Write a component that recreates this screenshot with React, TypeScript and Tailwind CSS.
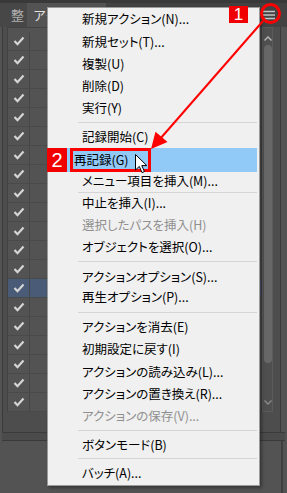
import React from 'react';

type Entry =
  | { kind: 'item'; label: string; h: string; disabled?: boolean; active?: boolean }
  | { kind: 'sep'; m: string };

const menu: Entry[] = [
  { kind: 'item', label: '新規アクション(N)...', h: 'h-[23px]' },
  { kind: 'item', label: '新規セット(T)...', h: 'h-[22px]' },
  { kind: 'item', label: '複製(U)', h: 'h-[22px]' },
  { kind: 'item', label: '削除(D)', h: 'h-[22px]' },
  { kind: 'item', label: '実行(Y)', h: 'h-[22px]' },
  { kind: 'sep', m: 'mt-[3px] mb-[4px]' },
  { kind: 'item', label: '記録開始(C)', h: 'h-[21px]' },
  { kind: 'item', label: '再記録(G)', h: 'h-[24px]', active: true },
  { kind: 'item', label: 'メニュー項目を挿入(M)...', h: 'h-[19px]' },
  { kind: 'sep', m: 'mt-px mb-0' },
  { kind: 'item', label: '中止を挿入(I)...', h: 'h-[21px]' },
  { kind: 'item', label: '選択したパスを挿入(H)', h: 'h-[23px]', disabled: true },
  { kind: 'item', label: 'オブジェクトを選択(O)...', h: 'h-[20px]' },
  { kind: 'sep', m: 'mt-[4px] mb-[5px]' },
  { kind: 'item', label: 'アクションオプション(S)...', h: 'h-[21px]' },
  { kind: 'item', label: '再生オプション(P)...', h: 'h-[18px]' },
  { kind: 'sep', m: 'mt-[6px] mb-[3px]' },
  { kind: 'item', label: 'アクションを消去(E)', h: 'h-[22px]' },
  { kind: 'item', label: '初期設定に戻す(I)', h: 'h-[23px]' },
  { kind: 'item', label: 'アクションの読み込み(L)...', h: 'h-[22px]' },
  { kind: 'item', label: 'アクションの置き換え(R)...', h: 'h-[22px]' },
  { kind: 'item', label: 'アクションの保存(V)...', h: 'h-[22px]', disabled: true },
  { kind: 'sep', m: 'mt-[3px] mb-[3px]' },
  { kind: 'item', label: 'ボタンモード(B)', h: 'h-[22px]' },
  { kind: 'sep', m: 'mt-[2px] mb-[3px]' },
  { kind: 'item', label: 'バッチ(A)...', h: 'h-[22px]' },
];

const rows = Array.from({ length: 20 }, (_, i) => i);

function Check() {
  return (
    <svg width="12" height="10" viewBox="0 0 12 10">
      <path d="M1.5 5 L4.5 8.2 L10.5 1.6" fill="none" stroke="#d6d6d6" strokeWidth="2.2" />
    </svg>
  );
}

export default function App() {
  return (
    <div className="relative h-[493px] w-[287px] overflow-hidden bg-[#535353] font-['Noto_Sans_CJK_JP','Noto_Sans',sans-serif]">
      {/* panel tabs */}
      <div className="h-[3px] bg-[#393939]" />
      <div className="flex h-[24px] bg-[#424242]">
        <div className="flex w-[27px] items-center bg-[#474747] pl-[11px] text-[13px] text-[#b0b0b0]">整</div>
        <div className="flex w-[21px] items-center overflow-hidden whitespace-nowrap bg-[#535353] pl-[6px] text-[13px] text-[#e4e4e4]">
          アク
        </div>
        <div className="w-[58px] bg-[#535353]" />
        <div className="flex-1" />
        <div className="mr-[8px] flex w-[20px] items-center justify-center">
          <svg width="12" height="10" viewBox="0 0 12 10">
            <path d="M0 1.5H12M0 5H12M0 8.5H12" stroke="#c4c4c4" strokeWidth="1.3" />
          </svg>
        </div>
      </div>

      {/* panel body */}
      <div className="ml-[2px] mr-[6px] flex h-[405px] border-x border-[#3a3a3a] bg-[#4d4d4d] pl-[4px]">
        <div className="h-[385px] w-[255px] border border-[#424242] bg-[#535353] pt-[4px]">
          {rows.map((i) => (
            <div
              key={i}
              className={`flex h-[19px] border-b border-[#4a4a4a] ${i === 13 ? 'bg-[#4a5b78]' : ''}`}
            >
              <div className="flex w-[22px] items-center justify-center border-r border-[#464646]">
                <Check />
              </div>
              <div className="flex-1" />
            </div>
          ))}
        </div>
        <div className="flex h-[385px] w-[11px] flex-col items-center border border-[#5a5a5a] bg-[#4f4f4f]">
          <svg className="mt-[8px]" width="8" height="5" viewBox="0 0 8 5">
            <path d="M0.5 4.5 L4 1 L7.5 4.5" fill="none" stroke="#b8b8b8" strokeWidth="1.4" />
          </svg>
          <div className="mt-[4px] h-[318px] w-[8px] rounded-full bg-[#676767]" />
          <div className="flex-1" />
          <svg className="mb-[6px]" width="8" height="5" viewBox="0 0 8 5">
            <path d="M0.5 0.5 L4 4 L7.5 0.5" fill="none" stroke="#8a8a8a" strokeWidth="1.4" />
          </svg>
        </div>
      </div>
      <div className="mx-[2px] h-[9px] border-y border-[#3a3a3a] bg-[#4b4b4b]" />
      <div className="mr-[4px] h-[52px] border-r-2 border-[#3e3e3e]" />

      {/* context menu */}
      <div className="absolute left-[47px] top-[7px] w-[213px] border border-[#9a9a9a] bg-[#f0f0f0] pb-px text-[12.5px] leading-none text-black shadow-[2px_2px_3px_rgba(0,0,0,0.35)] [font-feature-settings:'palt']">
        {menu.map((e, i) =>
          e.kind === 'sep' ? (
            <div key={i} className={`ml-[30px] mr-[2px] h-px bg-[#d5d5d5] ${e.m}`} />
          ) : e.active ? (
            <div key={i} className={`mx-[2px] flex items-center bg-[#91c9f7] pl-[24px] ${e.h}`}>
              {e.label}
            </div>
          ) : (
            <div
              key={i}
              className={`flex items-center pl-[34px] ${e.h} ${e.disabled ? 'text-[#8f8f8f]' : ''}`}
            >
              {e.label}
            </div>
          ),
        )}
      </div>

      {/* annotations */}
      <div className="absolute left-[70px] top-[148px] h-[24px] w-[81px] border-[3px] border-[#ff0000]" />
      <div className="absolute left-[47px] top-[148px] flex h-[24px] w-[20px] items-center justify-center bg-[#f00000] font-['Liberation_Sans',sans-serif] text-[20px] leading-none text-white">
        2
      </div>
      <div className="absolute left-[229px] top-[6px] flex h-[17px] w-[19px] items-center justify-center bg-[#f00000] font-['Liberation_Sans',sans-serif] text-[17px] leading-none text-white">
        1
      </div>
      <div className="absolute left-[260px] top-[3px] h-[21px] w-[21px] rounded-full border-[3px] border-[#ff0000]" />
      <svg className="absolute left-0 top-0" width="287" height="493" viewBox="0 0 287 493">
        <line x1="263" y1="21" x2="160" y2="139" stroke="#ff0000" strokeWidth="2" />
        <polygon points="151,149 167.5,142 155.5,131.7" fill="#ff0000" />
      </svg>
      <svg className="absolute left-[135px] top-[154px]" width="13" height="20" viewBox="0 0 13 20">
        <path
          d="M0.5 0.5 L0.5 16 L4.3 12.4 L7 18.6 L9.4 17.6 L6.8 11.6 L11.8 11.6 Z"
          fill="#ffffff"
          stroke="#000000"
          strokeWidth="1"
          strokeLinejoin="round"
        />
      </svg>
    </div>
  );
}
